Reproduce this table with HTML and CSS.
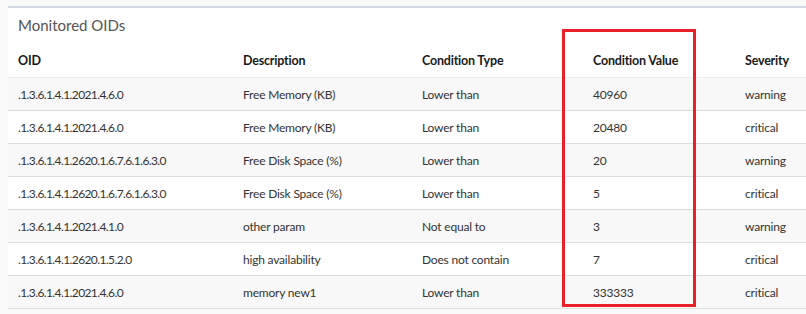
FILE: index.html
```html
<!DOCTYPE html>
<html>
<head>
<meta charset="utf-8">
<link rel="stylesheet" href="styles.css">
</head>
<body>
<div class="panel">
  <h3 class="title">Monitored OIDs</h3>
  <table class="oids">
    <colgroup>
      <col class="c-oid"><col class="c-desc"><col class="c-type"><col class="c-val"><col class="c-sev">
    </colgroup>
    <thead>
      <tr><th>OID</th><th>Description</th><th>Condition Type</th><th>Condition Value</th><th>Severity</th></tr>
    </thead>
    <tbody>
      <tr><td class="oid">.1.3.6.1.4.1.2021.4.6.0</td><td>Free Memory (KB)</td><td>Lower than</td><td>40960</td><td>warning</td></tr>
      <tr><td class="oid">.1.3.6.1.4.1.2021.4.6.0</td><td>Free Memory (KB)</td><td>Lower than</td><td>20480</td><td>critical</td></tr>
      <tr><td class="oid">.1.3.6.1.4.1.2620.1.6.7.6.1.6.3.0</td><td>Free Disk Space (%)</td><td>Lower than</td><td>20</td><td>warning</td></tr>
      <tr><td class="oid">.1.3.6.1.4.1.2620.1.6.7.6.1.6.3.0</td><td>Free Disk Space (%)</td><td>Lower than</td><td>5</td><td>critical</td></tr>
      <tr><td class="oid">.1.3.6.1.4.1.2021.4.1.0</td><td>other param</td><td>Not equal to</td><td>3</td><td>warning</td></tr>
      <tr><td class="oid">.1.3.6.1.4.1.2620.1.5.2.0</td><td>high availability</td><td>Does not contain</td><td>7</td><td>critical</td></tr>
      <tr><td class="oid">.1.3.6.1.4.1.2021.4.6.0</td><td>memory new1</td><td>Lower than</td><td>333333</td><td>critical</td></tr>
    </tbody>
  </table>
  <div class="highlight"></div>
</div>
</body>
</html>
```
FILE: styles.css
```css
html, body {
  margin: 0;
  padding: 0;
}
body {
  background: #f9f9f9;
  font-family: Lato, "Liberation Sans", sans-serif;
  color: #333;
  padding: 6px 0 0 8px;
  overflow: hidden;
}
.panel {
  position: relative;
  background: #fff;
  border-top: 2px solid #d3d6e3;
}
.title {
  margin: 0;
  padding: 7px 10px 0 10px;
  height: 36px;
  box-sizing: border-box;
  font-size: 15px;
  font-weight: 400;
  color: #555;
  line-height: 20px;
}
.oids {
  border-collapse: collapse;
  table-layout: fixed;
  width: 100%;
  font-size: 12px;
  letter-spacing: -0.2px;
}
.c-oid { width: 225px; }
.c-desc { width: 179px; }
.c-type { width: 171px; }
.c-val { width: 152px; }
.oids th {
  text-align: left;
  font-weight: 700;
  font-size: 12.5px;
  color: #1a1a1a;
  height: 33px;
  padding: 0 10px;
  vertical-align: middle;
  border-bottom: 1px solid #eee;
  white-space: nowrap;
}
.oids td {
  height: 32px;
  padding: 0 10px;
  vertical-align: middle;
  border-bottom: 1px solid #dedede;
  white-space: nowrap;
}
.oids td.oid {
  letter-spacing: -0.6px;
}
.oids tbody tr:nth-child(odd) td {
  background: #f8f8f8;
}
.highlight {
  position: absolute;
  left: 554px;
  top: 21px;
  width: 128px;
  height: 272px;
  border: 3px solid #e8202a;
}
```
